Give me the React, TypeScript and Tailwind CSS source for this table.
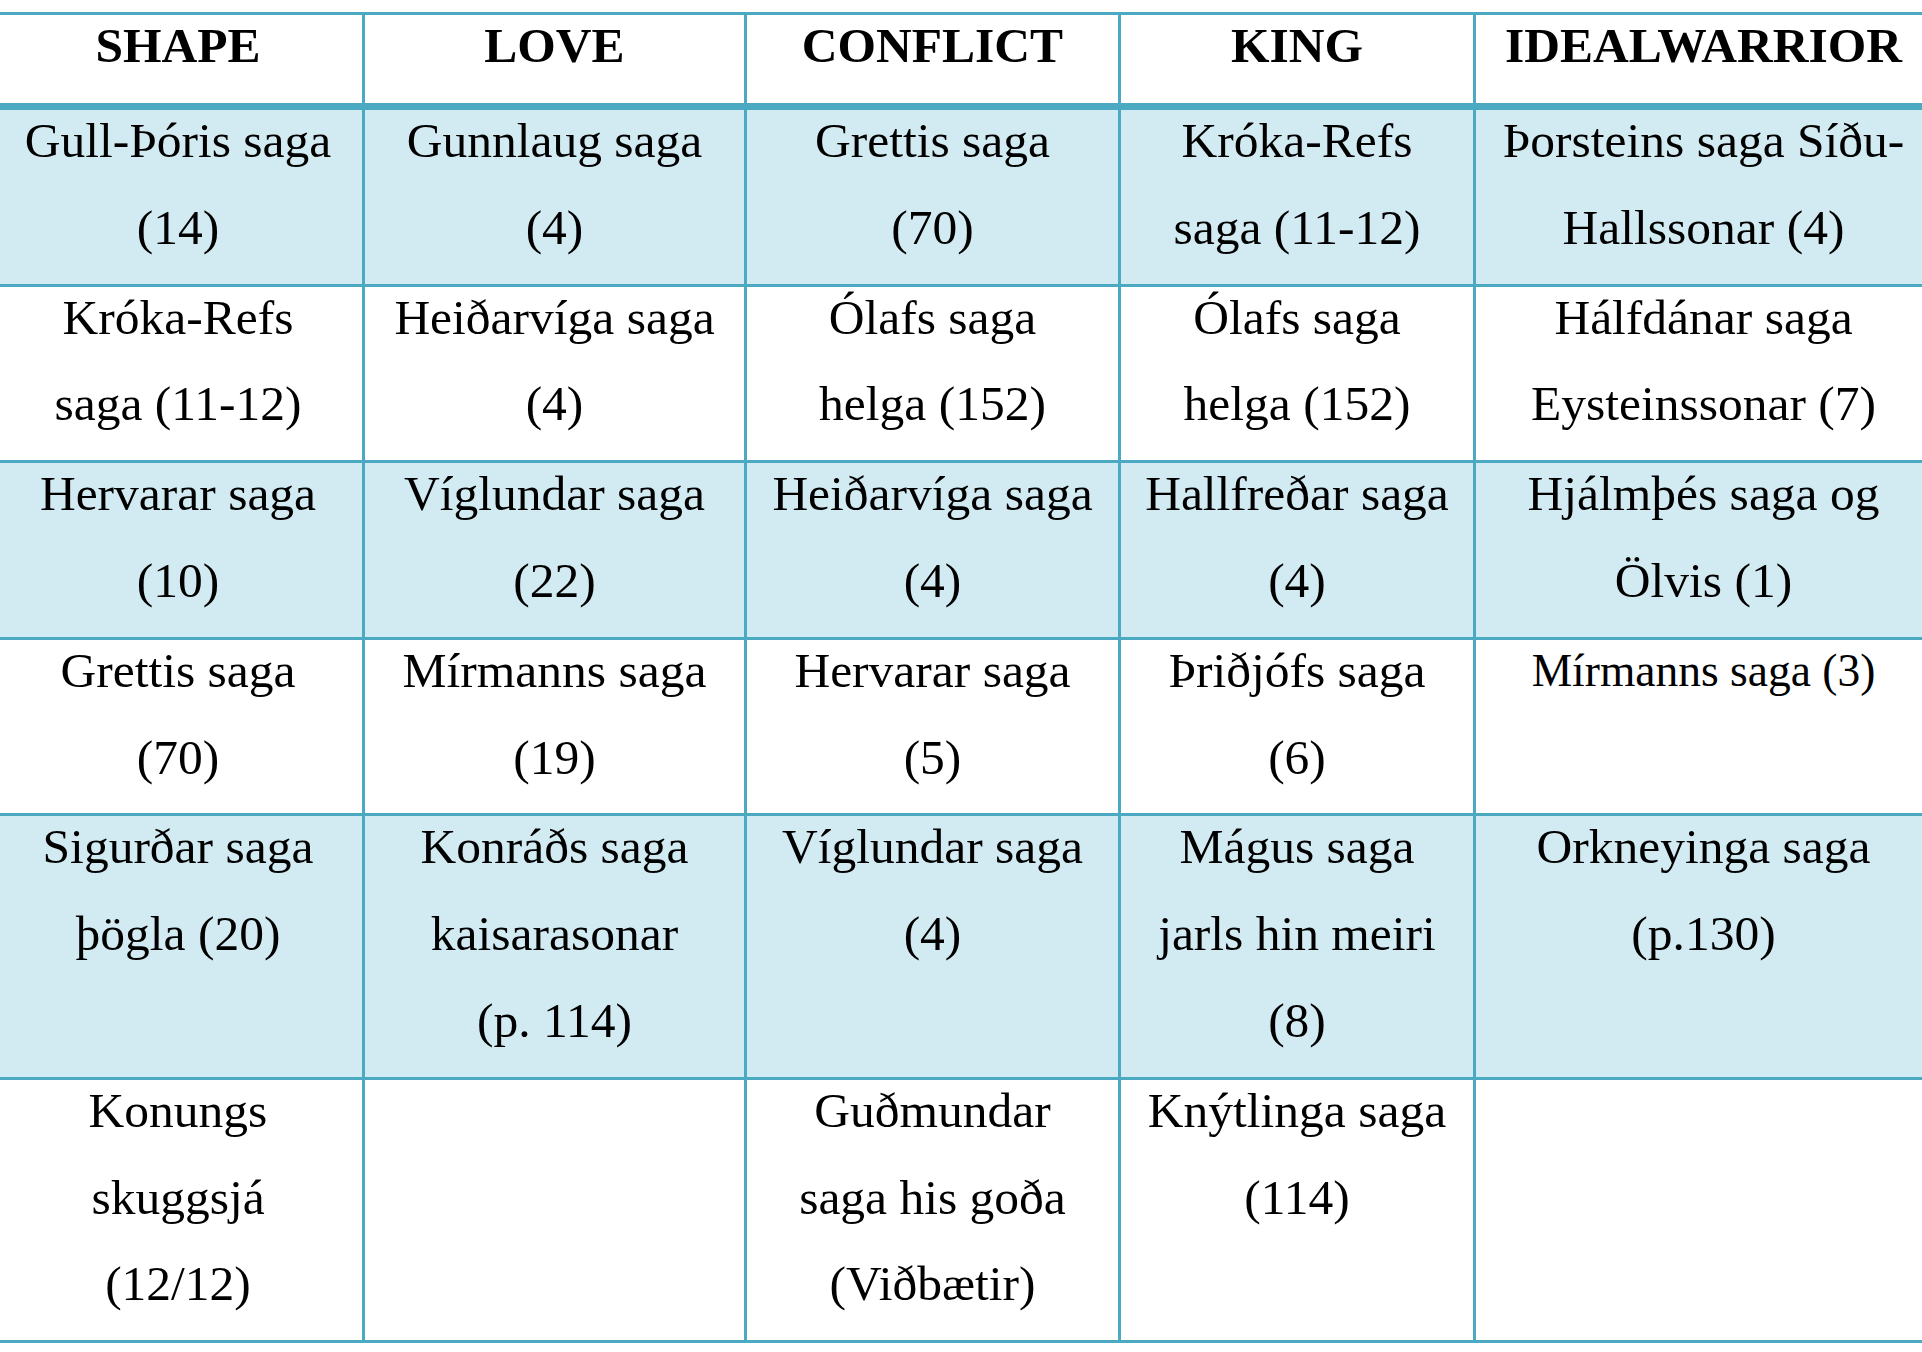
type Cell = { lines: string[]; small?: boolean };

const HEADERS = ["SHAPE", "LOVE", "CONFLICT", "KING", "IDEALWARRIOR"];

const ROWS: Cell[][] = [
  [
    { lines: ["Gull-Þóris saga", "(14)"] },
    { lines: ["Gunnlaug saga", "(4)"] },
    { lines: ["Grettis saga", "(70)"] },
    { lines: ["Króka-Refs", "saga (11-12)"] },
    { lines: ["Þorsteins saga Síðu-", "Hallssonar (4)"] },
  ],
  [
    { lines: ["Króka-Refs", "saga (11-12)"] },
    { lines: ["Heiðarvíga saga", "(4)"] },
    { lines: ["Ólafs saga", "helga (152)"] },
    { lines: ["Ólafs saga", "helga (152)"] },
    { lines: ["Hálfdánar saga", "Eysteinssonar (7)"] },
  ],
  [
    { lines: ["Hervarar saga", "(10)"] },
    { lines: ["Víglundar saga", "(22)"] },
    { lines: ["Heiðarvíga saga", "(4)"] },
    { lines: ["Hallfreðar saga", "(4)"] },
    { lines: ["Hjálmþés saga og", "Ölvis (1)"] },
  ],
  [
    { lines: ["Grettis saga", "(70)"] },
    { lines: ["Mírmanns saga", "(19)"] },
    { lines: ["Hervarar saga", "(5)"] },
    { lines: ["Þriðjófs saga", "(6)"] },
    { lines: ["Mírmanns saga (3)"], small: true },
  ],
  [
    { lines: ["Sigurðar saga", "þögla (20)"] },
    { lines: ["Konráðs saga", "kaisarasonar", "(p. 114)"] },
    { lines: ["Víglundar saga", "(4)"] },
    { lines: ["Mágus saga", "jarls hin meiri", "(8)"] },
    { lines: ["Orkneyinga saga", "(p.130)"] },
  ],
  [
    { lines: ["Konungs", "skuggsjá", "(12/12)"] },
    { lines: [] },
    { lines: ["Guðmundar", "saga his goða", "(Viðbætir)"] },
    { lines: ["Knýtlinga saga", "(114)"] },
    { lines: [] },
  ],
];

const rowGrid =
  "grid grid-cols-[371px_382px_374px_355px_455px] border-b-[3px] border-[#4baac2]";

function Line({ text, small }: { text: string; small?: boolean }) {
  return (
    <div
      className={
        "whitespace-nowrap leading-[61px] pb-[25.8px] " +
        (small ? "text-[45.5px]" : "text-[49.5px]")
      }
    >
      {text}
    </div>
  );
}

function BodyCell({ cell, last }: { cell: Cell; last: boolean }) {
  return (
    <div
      className={
        "flex flex-col items-center text-center " +
        (last ? "" : "border-r-[3px] border-[#4baac2]")
      }
    >
      {cell.lines.map((line, i) => (
        <Line key={i} text={line} small={cell.small} />
      ))}
    </div>
  );
}

export default function App() {
  return (
    <div className="w-[1922px] h-[1352px] overflow-hidden bg-white pt-[12px] font-['Liberation_Serif','Times_New_Roman',serif] text-black">
      <div className="ml-[-6px] w-[1937px] border-t-[3px] border-[#4baac2]">
        <div className="grid grid-cols-[371px_382px_374px_355px_455px] border-b-[7px] border-[#4baac2]">
          {HEADERS.map((h, i) => (
            <div
              key={h}
              className={
                "flex justify-center text-center font-bold " +
                (i < HEADERS.length - 1 ? "border-r-[3px] border-[#4baac2]" : "")
              }
            >
              <div className="whitespace-nowrap text-[49.5px] leading-[61px] pb-[27px]">
                {h}
              </div>
            </div>
          ))}
        </div>

        {ROWS.map((row, r) => (
          <div
            key={r}
            className={rowGrid + (r % 2 === 0 ? " bg-[#d2eaf1]" : " bg-white")}
          >
            {row.map((cell, c) => (
              <BodyCell key={c} cell={cell} last={c === row.length - 1} />
            ))}
          </div>
        ))}
      </div>
    </div>
  );
}
